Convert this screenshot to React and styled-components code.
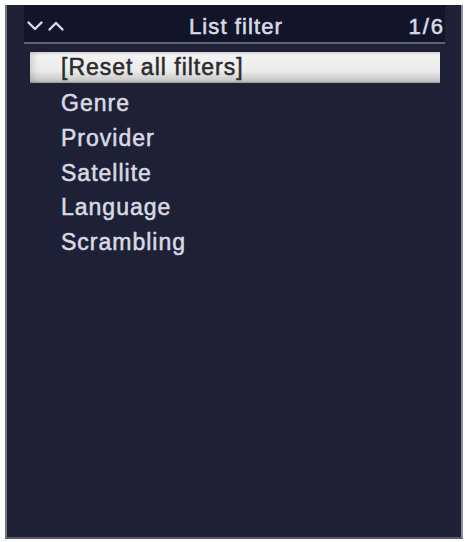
import React from "react";
import styled, { createGlobalStyle } from "styled-components";

const Global = createGlobalStyle`
  html, body { margin: 0; padding: 0; background: #ffffff; }
  body { font-family: "Liberation Sans", Arial, sans-serif; }
`;

const Screen = styled.div`
  box-sizing: border-box;
  margin: 5px 0 0 5px;
  width: 458px;
  height: 534px;
  background: #1e2135;
  border-left: 2px solid #6f7284;
  border-right: 2px solid #8c8fa0;
  border-bottom: 2px solid #5a5d6e;
  padding: 0 16px 0 17px;
  display: flex;
  flex-direction: column;
`;

const Header = styled.div`
  height: 37px;
  background: #12142a;
  display: flex;
  align-items: center;
  padding: 6px 2px 0 3px;
  box-sizing: border-box;
  color: #d9dae3;
  font-weight: 400;
  font-size: 22px;
  letter-spacing: 1.1px;
  -webkit-text-stroke: 0.6px #d9dae3;
`;

const Arrows = styled.div`
  width: 120px;
  display: flex;
  align-items: center;
  gap: 5px;
  margin-top: -2px;
`;

const Title = styled.div`
  flex: 1;
  text-align: center;
`;

const Page = styled.div`
  width: 120px;
  text-align: right;
  letter-spacing: 2px;
  margin-right: -2px;
`;

const Divider = styled.div`
  height: 2px;
  background: #5f6274;
`;

const List = styled.div`
  display: flex;
  flex-direction: column;
  padding: 6px 5px 0 6px;
`;

const Row = styled.div`
  height: 34.6px;
  display: flex;
  align-items: center;
`;

const Item = styled.div`
  flex: 1;
  height: ${(p) => (p.$selected ? "31px" : "auto")};
  display: flex;
  align-items: center;
  padding: ${(p) => (p.$selected ? "1px 0 0 31px" : "4px 0 0 31px")};
  box-sizing: border-box;
  font-size: 23px;
  font-weight: 400;
  letter-spacing: 1px;
  color: ${(p) => (p.$selected ? "#2b2b2d" : "#d8d9e3")};
  -webkit-text-stroke: 0.55px ${(p) => (p.$selected ? "#2b2b2d" : "#d8d9e3")};
  background: ${(p) =>
    p.$selected
      ? "linear-gradient(to bottom, #d9d9db 0%, #f3f3f3 12%, #ececec 60%, #c9c9cb 92%, #9d9ea4 100%)"
      : "transparent"};
  box-shadow: ${(p) => (p.$selected ? "inset 6px 0 8px -4px rgba(0,0,0,0.18)" : "none")};
`;

const Chevron = ({ up }) => (
  <svg width="16" height="10" viewBox="0 0 16 10">
    <path
      d={up ? "M1.5 8.5 L8 2 L14.5 8.5" : "M1.5 1.5 L8 8 L14.5 1.5"}
      fill="none"
      stroke="#d9dae3"
      strokeWidth="2.4"
      strokeLinecap="round"
      strokeLinejoin="round"
    />
  </svg>
);

const items = ["[Reset all filters]", "Genre", "Provider", "Satellite", "Language", "Scrambling"];

export default function App() {
  return (
    <>
      <Global />
      <Screen>
        <Header>
          <Arrows>
            <Chevron />
            <Chevron up />
          </Arrows>
          <Title>List filter</Title>
          <Page>1/6</Page>
        </Header>
        <Divider />
        <List>
          {items.map((t, i) => (
            <Row key={t}>
              <Item $selected={i === 0}>{t}</Item>
            </Row>
          ))}
        </List>
      </Screen>
    </>
  );
}
